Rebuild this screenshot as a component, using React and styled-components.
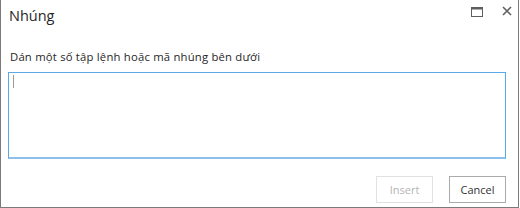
import React from 'react';
import styled, { createGlobalStyle } from 'styled-components';

const GlobalStyle = createGlobalStyle`
  html, body {
    margin: 0;
    padding: 0;
    background: #fff;
  }
  body {
    font-family: "Open Sans", "Noto Sans", sans-serif;
    color: #333;
  }
`;

const Dialog = styled.div`
  box-sizing: border-box;
  width: 519px;
  height: 208px;
  display: flex;
  flex-direction: column;
  background: #fff;
  border: 1px solid #7a7a7a;
  border-top: none;
  padding-bottom: 4px;
`;

const Header = styled.div`
  height: 36px;
  display: flex;
  justify-content: space-between;
  align-items: flex-start;
  padding: 6px 6px 0 8px;
  box-sizing: border-box;
`;

const Title = styled.h1`
  margin: 0;
  font-size: 14.5px;
  line-height: 20px;
  font-weight: 400;
  color: #262626;
`;

const Controls = styled.div`
  display: flex;
  align-items: flex-start;
  gap: 19px;
`;

const IconButton = styled.button`
  border: none;
  background: none;
  padding: 0;
  margin: ${(props) => props.offset || 0}px 0 0 0;
  display: block;
  cursor: pointer;
  svg {
    display: block;
  }
`;

const Body = styled.div`
  padding: 0 12px 0 7px;
`;

const Label = styled.div`
  margin-top: 14px;
  padding-left: 2px;
  font-size: 11.3px;
  letter-spacing: 0.2px;
  line-height: 14px;
  color: #262626;
`;

const Editor = styled.div`
  margin-top: 8px;
  height: 87px;
  box-sizing: border-box;
  border: 1px solid #5aa9e4;
  border-bottom: 2px solid #8cc0ea;
  padding: 2px 4px;
`;

const Caret = styled.span`
  display: block;
  width: 1px;
  height: 13px;
  background: #9a9a9a;
`;

const Footer = styled.div`
  margin-top: auto;
  display: flex;
  justify-content: flex-end;
  gap: 16px;
  padding-right: 12px;
`;

const Button = styled.button`
  box-sizing: border-box;
  width: 57px;
  height: 27px;
  padding: 0;
  background: #fff;
  font-family: "Open Sans", "Noto Sans", sans-serif;
  font-size: 11px;
  color: ${(props) => (props.disabled ? '#b4b4b4' : '#333')};
  border: 1px solid ${(props) => (props.disabled ? '#e1e1e1' : '#ababab')};
`;

const MaximizeIcon = () => (
  <svg width="12" height="10" viewBox="0 0 12 10">
    <rect x="0.5" y="0.5" width="11" height="9" fill="none" stroke="#5f5f5f" strokeWidth="1" />
    <rect x="0.5" y="1" width="11" height="1.5" fill="#5f5f5f" />
  </svg>
);

const CloseIcon = () => (
  <svg width="10" height="10" viewBox="0 0 10 10">
    <path d="M1 1L9 9M9 1L1 9" stroke="#5f5f5f" strokeWidth="1.6" />
  </svg>
);

const App = () => {
  return (
    <>
      <GlobalStyle />
      <Dialog>
        <Header>
          <Title>Nhúng</Title>
          <Controls>
            <IconButton aria-label="Maximize" offset={1}>
              <MaximizeIcon />
            </IconButton>
            <IconButton aria-label="Close">
              <CloseIcon />
            </IconButton>
          </Controls>
        </Header>
        <Body>
          <Label>Dán một số tập lệnh hoặc mã nhúng bên dưới</Label>
          <Editor>
            <Caret />
          </Editor>
        </Body>
        <Footer>
          <Button disabled>Insert</Button>
          <Button>Cancel</Button>
        </Footer>
      </Dialog>
    </>
  );
};

export default App;
